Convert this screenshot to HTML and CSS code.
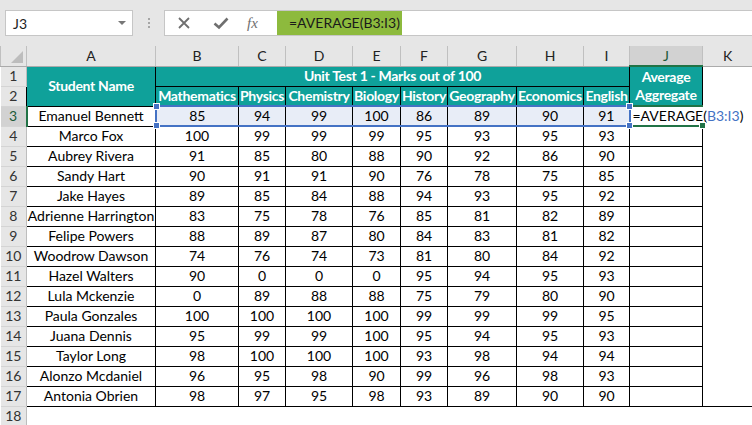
FILE: index.html
```html
<!DOCTYPE html>
<html lang="en">
<head>
    <meta charset="UTF-8">
    <meta name="viewport" content="width=device-width, initial-scale=1.0">
    <title>Average Aggregate</title>
    <link rel="stylesheet" href="styles.css">
</head>
<body>
    <div class="ribbon">
        <div class="namebox">
            <span>J3</span>
            <span class="caret"></span>
        </div>
        <div class="grip"><i></i><i></i><i></i></div>
        <div class="formula">
            <div class="tools">
                <svg class="ico" width="14" height="14" viewBox="0 0 14 14">
                    <path d="M2 2 L12 12 M12 2 L2 12" stroke="#6f6f6f" stroke-width="1.8" fill="none"/>
                </svg>
                <svg class="ico" width="16" height="14" viewBox="0 0 16 14">
                    <path d="M1.5 7.5 L6 11.5 L14.5 2.5" stroke="#6f6f6f" stroke-width="2.6" fill="none"/>
                </svg>
                <span class="fx">fx</span>
            </div>
            <div class="formula-text">=AVERAGE(B3:I3)</div>
        </div>
    </div>

    <table class="sheet">
        <colgroup>
            <col class="c-row">
            <col class="c-a">
            <col class="c-b">
            <col class="c-c">
            <col class="c-d">
            <col class="c-e">
            <col class="c-f">
            <col class="c-g">
            <col class="c-h">
            <col class="c-i">
            <col class="c-j">
            <col class="c-k">
        </colgroup>
        <tr class="colhead">
            <th class="corner"><span class="tri"></span></th>
            <th>A</th><th>B</th><th>C</th><th>D</th><th>E</th><th>F</th><th>G</th><th>H</th><th>I</th>
            <th class="on">J</th><th class="last">K</th>
        </tr>
        <tr>
            <th class="rowhead">1</th>
            <td class="hd" rowspan="2">Student Name</td>
            <td class="hd" colspan="8">Unit Test 1 - Marks out of 100</td>
            <td class="hd wrap" rowspan="2"><span class="two">Average<br>Aggregate</span></td>
            <td class="blank"></td>
        </tr>
        <tr>
            <th class="rowhead">2</th>
            <td class="hd">Mathematics</td>
            <td class="hd">Physics</td>
            <td class="hd">Chemistry</td>
            <td class="hd">Biology</td>
            <td class="hd">History</td>
            <td class="hd">Geography</td>
            <td class="hd">Economics</td>
            <td class="hd">English</td>
            <td class="blank"></td>
        </tr>
        <tr>
            <th class="rowhead on">3</th>
            <td>Emanuel Bennett</td>
            <td class="sel sel-l"><span class="knob tl"></span><span class="knob bl"></span>85</td>
            <td class="sel">94</td>
            <td class="sel">99</td>
            <td class="sel">100</td>
            <td class="sel">86</td>
            <td class="sel">89</td>
            <td class="sel">90</td>
            <td class="sel sel-r">91<span class="knob tr"></span><span class="knob br"></span></td>
            <td class="active"><span class="entry">=AVERAGE(<span class="ref">B3:I3</span>)</span><span class="handle"></span></td>
            <td class="blank"></td>
        </tr>
        <tr><th class="rowhead">4</th><td>Marco Fox</td><td>100</td><td>99</td><td>99</td><td>99</td><td>95</td><td>93</td><td>95</td><td>93</td><td></td><td class="blank"></td></tr>
        <tr><th class="rowhead">5</th><td>Aubrey Rivera</td><td>91</td><td>85</td><td>80</td><td>88</td><td>90</td><td>92</td><td>86</td><td>90</td><td></td><td class="blank"></td></tr>
        <tr><th class="rowhead">6</th><td>Sandy Hart</td><td>90</td><td>91</td><td>91</td><td>90</td><td>76</td><td>78</td><td>75</td><td>85</td><td></td><td class="blank"></td></tr>
        <tr><th class="rowhead">7</th><td>Jake Hayes</td><td>89</td><td>85</td><td>84</td><td>88</td><td>94</td><td>93</td><td>95</td><td>92</td><td></td><td class="blank"></td></tr>
        <tr><th class="rowhead">8</th><td>Adrienne Harrington</td><td>83</td><td>75</td><td>78</td><td>76</td><td>85</td><td>81</td><td>82</td><td>89</td><td></td><td class="blank"></td></tr>
        <tr><th class="rowhead">9</th><td>Felipe Powers</td><td>88</td><td>89</td><td>87</td><td>80</td><td>84</td><td>83</td><td>81</td><td>82</td><td></td><td class="blank"></td></tr>
        <tr><th class="rowhead">10</th><td>Woodrow Dawson</td><td>74</td><td>76</td><td>74</td><td>73</td><td>81</td><td>80</td><td>84</td><td>92</td><td></td><td class="blank"></td></tr>
        <tr><th class="rowhead">11</th><td>Hazel Walters</td><td>90</td><td>0</td><td>0</td><td>0</td><td>95</td><td>94</td><td>95</td><td>93</td><td></td><td class="blank"></td></tr>
        <tr><th class="rowhead">12</th><td>Lula Mckenzie</td><td>0</td><td>89</td><td>88</td><td>88</td><td>75</td><td>79</td><td>80</td><td>90</td><td></td><td class="blank"></td></tr>
        <tr><th class="rowhead">13</th><td>Paula Gonzales</td><td>100</td><td>100</td><td>100</td><td>100</td><td>99</td><td>99</td><td>99</td><td>95</td><td></td><td class="blank"></td></tr>
        <tr><th class="rowhead">14</th><td>Juana Dennis</td><td>95</td><td>99</td><td>99</td><td>100</td><td>95</td><td>94</td><td>95</td><td>93</td><td></td><td class="blank"></td></tr>
        <tr><th class="rowhead">15</th><td>Taylor Long</td><td>98</td><td>100</td><td>100</td><td>100</td><td>93</td><td>98</td><td>94</td><td>94</td><td></td><td class="blank"></td></tr>
        <tr><th class="rowhead">16</th><td>Alonzo Mcdaniel</td><td>96</td><td>95</td><td>98</td><td>90</td><td>99</td><td>96</td><td>98</td><td>93</td><td></td><td class="blank"></td></tr>
        <tr><th class="rowhead">17</th><td>Antonia Obrien</td><td>98</td><td>97</td><td>95</td><td>98</td><td>93</td><td>89</td><td>90</td><td>90</td><td></td><td class="blank"></td></tr>
        <tr class="empty">
            <th class="rowhead">18</th>
            <td class="blank"></td><td class="blank"></td><td class="blank"></td><td class="blank"></td>
            <td class="blank"></td><td class="blank"></td><td class="blank"></td><td class="blank"></td>
            <td class="blank"></td><td class="blank"></td><td class="blank"></td>
        </tr>
    </table>
</body>
</html>
```

FILE: styles.css
```css
body {
    margin: 0;
    background-color: #fff;
    font-family: 'Lato', 'Liberation Sans', sans-serif;
    overflow: hidden;
}

/* top bar: name box + formula bar */
.ribbon {
    height: 46px;
    background-color: #e6e6e6;
    display: flex;
    align-items: flex-start;
    padding-top: 10px;
    box-sizing: border-box;
}
.namebox {
    margin-left: 5px;
    width: 128px;
    height: 26px;
    box-sizing: border-box;
    background-color: #fff;
    border: 1px solid #c6c6c6;
    display: flex;
    align-items: center;
    justify-content: space-between;
    padding: 0 6px 0 7px;
    font-size: 14px;
    color: #222;
}
.caret {
    width: 0;
    height: 0;
    border-left: 4px solid transparent;
    border-right: 4px solid transparent;
    border-top: 4px solid #777;
}
.grip {
    width: 31px;
    height: 26px;
    display: flex;
    flex-direction: column;
    align-items: center;
    justify-content: center;
    gap: 2px;
}
.grip i {
    width: 2px;
    height: 2px;
    background-color: #a6a6a6;
}
.formula {
    flex: 1;
    height: 26px;
    box-sizing: border-box;
    background-color: #fff;
    border: 1px solid #c6c6c6;
    border-right: none;
    display: flex;
}
.tools {
    width: 112px;
    display: flex;
    align-items: center;
    padding-left: 12px;
    gap: 22px;
    box-sizing: border-box;
}
.fx {
    font-family: 'Liberation Serif', serif;
    font-style: italic;
    font-size: 15px;
    color: #6f6f6f;
    margin-left: -4px;
}
.formula-text {
    width: 125px;
    background-color: #8dba3d;
    color: #1a1a1a;
    font-size: 14px;
    line-height: 24px;
    padding-left: 12px;
    box-sizing: border-box;
    white-space: nowrap;
}

/* grid */
.sheet {
    border-collapse: collapse;
    table-layout: fixed;
    width: 752px;
    font-size: 14px;
    color: #000;
}
.c-row { width: 26px; }
.c-a { width: 129px; }
.c-b { width: 83px; }
.c-c { width: 47px; }
.c-d { width: 67px; }
.c-e { width: 48px; }
.c-f { width: 47px; }
.c-g { width: 69px; }
.c-h { width: 67px; }
.c-i { width: 46px; }
.c-j { width: 73px; }
.c-k { width: 50px; }

.sheet tr { height: 20px; }
.sheet td, .sheet th {
    padding: 0;
    border: 1px solid #000;
    text-align: center;
    white-space: nowrap;
    overflow: hidden;
    line-height: 18px;
    font-weight: normal;
}

.colhead { height: 19px; }
.colhead th {
    background-color: #e6e6e6;
    border: 1px solid #c0c0c0;
    border-top: none;
    border-bottom-color: #ababab;
    color: #222;
}
.colhead th.on {
    background-color: #d2d2d2;
    border-bottom: 2px solid #217346;
    color: #1d5a38;
}
.colhead th.last { border-right: none; }
.corner { position: relative; }
.tri {
    position: absolute;
    right: 3px;
    bottom: 3px;
    width: 0;
    height: 0;
    border-left: 12px solid transparent;
    border-bottom: 12px solid #bdbdbd;
}

.sheet th.rowhead {
    background-color: #e6e6e6;
    border: 1px solid #d4d4d4;
    border-right-color: #bdbdbd;
    border-left: none;
    color: #333;
}
.sheet th.rowhead.on {
    background-color: #d2d2d2;
    border-right: 2px solid #217346;
    color: #1d5a38;
}

.sheet td.hd {
    background-color: #0fa19a;
    color: #fff;
    font-weight: bold;
    letter-spacing: -0.3px;
    overflow: visible;
}
.sheet td.wrap { line-height: 18px; }
.two { display: inline-block; vertical-align: top; }

.sheet td.blank {
    border: none;
}
.empty td.blank { border-top: 1px solid #000; }

/* formula reference range B3:I3 */
.sheet td.sel {
    background-color: #e8edf7;
    border-top: 2px solid #4472c4;
    border-bottom: 2px solid #4472c4;
    overflow: visible;
}
.sheet td.sel-l { border-left: 2px solid #4472c4; position: relative; }
.sheet td.sel-r { border-right: 2px solid #4472c4; position: relative; }
.knob {
    position: absolute;
    width: 5px;
    height: 5px;
    background-color: #4472c4;
    border: 1px solid #fff;
    z-index: 2;
}
.knob.tl { left: -4px; top: -4px; }
.knob.bl { left: -4px; bottom: -4px; }
.knob.tr { right: -4px; top: -4px; }
.knob.br { right: -4px; bottom: -4px; }

/* active cell J3 */
.sheet td.active {
    position: relative;
    overflow: visible;
    text-align: left;
    border: 2px solid #217346;
    border-right: none;
}
.entry { padding-left: 2px; }
.ref { color: #4472c4; }
.handle {
    position: absolute;
    right: -3px;
    bottom: -4px;
    width: 5px;
    height: 5px;
    background-color: #217346;
    border: 1px solid #fff;
}
```
